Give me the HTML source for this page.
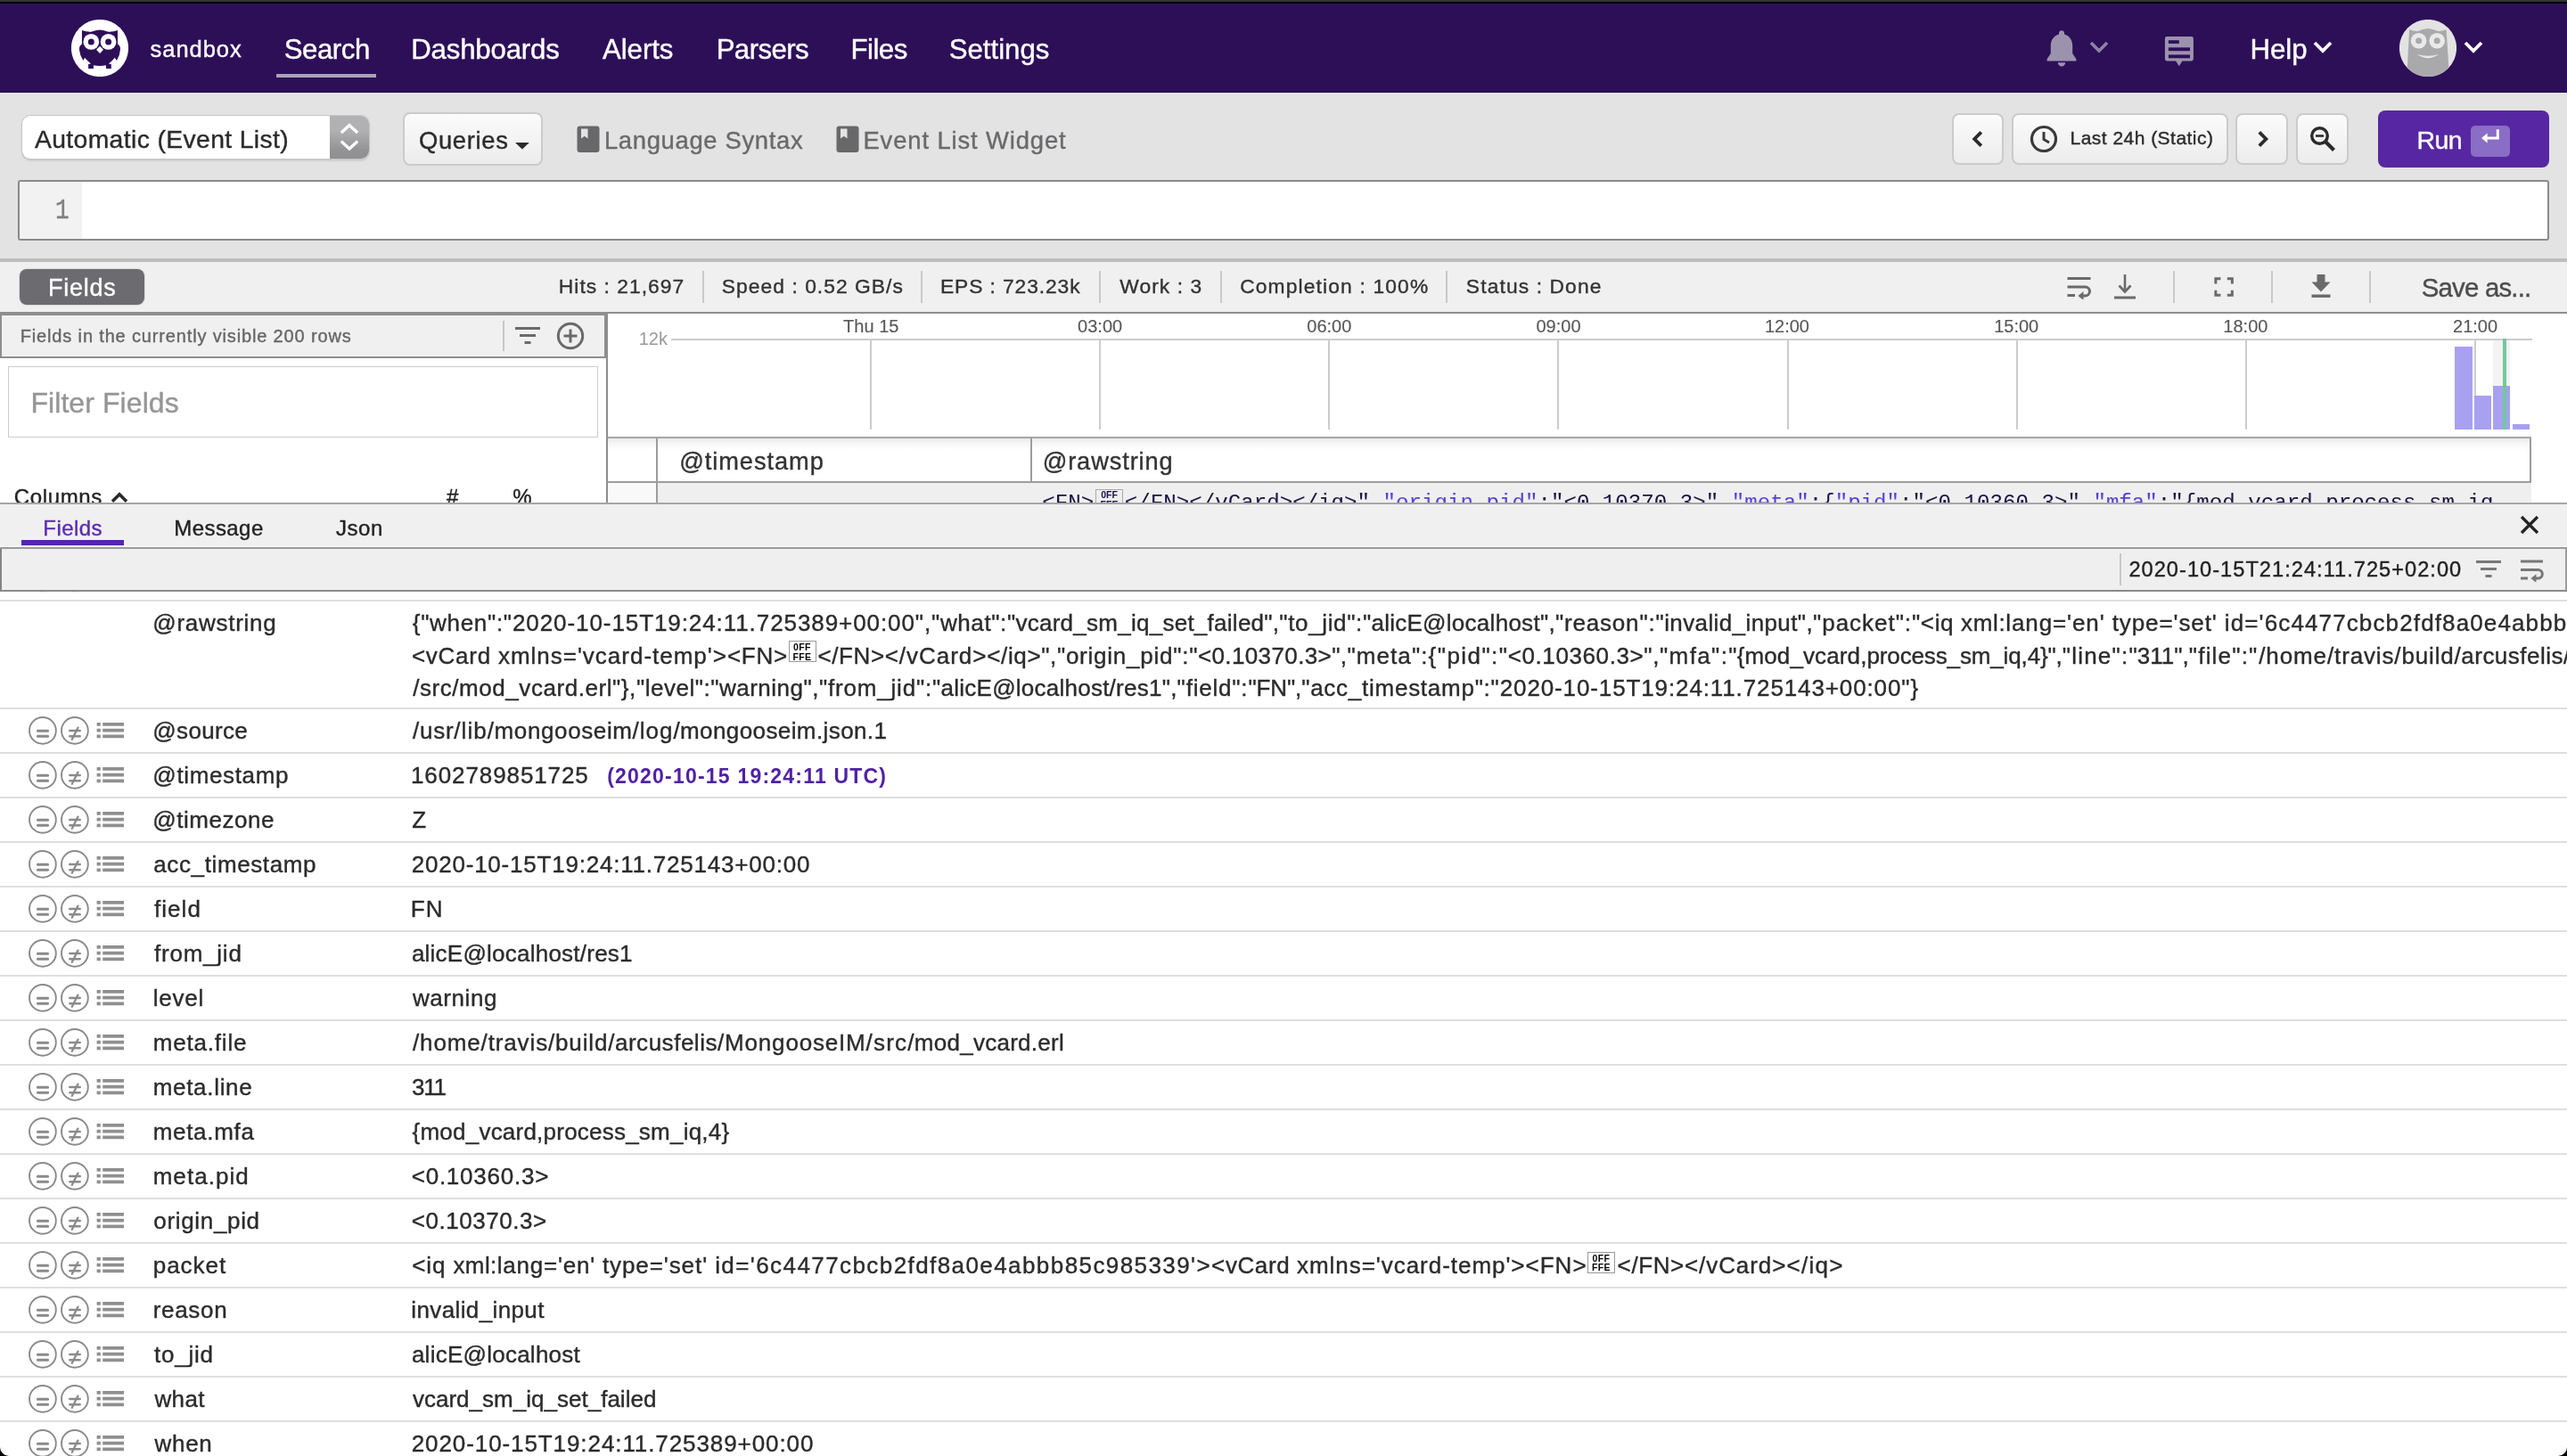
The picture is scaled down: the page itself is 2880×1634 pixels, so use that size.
<!DOCTYPE html>
<html><head><meta charset="utf-8"><title>sandbox - Search</title><style>
html,body{margin:0;padding:0;}
body{width:2880px;height:1634px;overflow:hidden;position:relative;background:#fff;font-family:"Liberation Sans",sans-serif;}
#root{position:absolute;left:0;top:0;width:2880px;height:1634px;overflow:hidden;will-change:transform;}
.b{position:absolute;display:block;}
.t{position:absolute;white-space:pre;-webkit-text-stroke:0.38px currentColor;}
.hv{-webkit-text-stroke:0.4px currentColor;}
.ns{-webkit-text-stroke:0 transparent;}
.lt{-webkit-text-stroke:0.15px currentColor;}
.mono{font-family:"Liberation Mono",monospace;}
.g2{display:inline-block;width:31.6px;margin:0 1.55px;height:24px;border:1px solid #aaa;box-sizing:border-box;vertical-align:1px;font-size:10.5px;line-height:10.5px;letter-spacing:0;font-family:"Liberation Sans",sans-serif;font-weight:700;text-align:center;}
.g{display:inline-block;width:31px;height:24px;border:1px solid #9a9a9a;box-sizing:border-box;vertical-align:-2px;font-size:10.5px;line-height:10.5px;letter-spacing:0.4px;font-weight:700;text-align:center;padding-top:1px;overflow:hidden;}
</style></head>
<body>
<div id="root">
<div class="b" style="left:0px;top:0px;width:2880px;height:2px;background:#343434;"></div>
<div class="b" style="left:0px;top:2px;width:2880px;height:2px;background:#000;"></div>
<div class="b" style="left:0px;top:4px;width:2880px;height:100px;background:#2d0f58;"></div>
<div class="b" style="left:0px;top:103px;width:2880px;height:1px;background:#220a48;"></div>
<svg class="b" style="left:80px;top:22px;" width="64" height="64" viewBox="0 0 64 64">
<circle cx="32" cy="32" r="32.100" fill="#fff"/>
<path d="M11.900 11.900 Q17 13.900 22.300 13.700 Q27 12 31.900 11.600 Q37 12 41.500 13.700 Q47 13.900 52 11.900 L52 27.500 Q55.600 29.500 54.900 34 Q54.500 40.500 50.900 46 L48.800 42.800 Q46 46.500 41.900 49.400 L44.800 50 L44.800 54.900 L39 54.900 L39 51.200 Q32 52.600 24.900 51.200 L24.900 54.900 L19.100 54.900 L19.100 50 L22 49.400 Q18 46.500 15.100 42.800 L13.400 46 Q9.600 40.500 9 34 Q8.400 29.500 11.900 27.500 Z" fill="#2d0f58"/>
<circle cx="22.300" cy="24.900" r="8.900" fill="#fff"/><circle cx="41.600" cy="24.900" r="8.900" fill="#fff"/>
<circle cx="22.300" cy="24.900" r="3.500" fill="#2d0f58"/><circle cx="41.600" cy="24.900" r="3.500" fill="#2d0f58"/>
<path d="M32 29.800 L36 33.800 L32.100 37.900 L28.100 33.800 Z" fill="#fff"/>
</svg>
<div class="t hv" style="left:168.59px;top:39.00px;font-size:25.5px;line-height:33px;color:#fff;letter-spacing:0.962px;">sandbox</div>
<div class="t hv" style="left:318.68px;top:35.00px;font-size:31.2px;line-height:41px;color:#fff;letter-spacing:-0.443px;">Search</div>
<div class="t hv" style="left:461.24px;top:35.00px;font-size:31.2px;line-height:41px;color:#fff;letter-spacing:-0.172px;">Dashboards</div>
<div class="t hv" style="left:676.04px;top:35.00px;font-size:31.2px;line-height:41px;color:#fff;letter-spacing:-0.073px;">Alerts</div>
<div class="t hv" style="left:803.64px;top:35.00px;font-size:31.2px;line-height:41px;color:#fff;letter-spacing:-0.568px;">Parsers</div>
<div class="t hv" style="left:954.44px;top:35.00px;font-size:31.2px;line-height:41px;color:#fff;letter-spacing:-0.497px;">Files</div>
<div class="t hv" style="left:1064.68px;top:35.00px;font-size:31.2px;line-height:41px;color:#fff;">Settings</div>
<div class="b" style="left:310px;top:83px;width:112px;height:4px;background:#a7a4b6;"></div>
<svg class="b" style="left:2294px;top:32px;" width="38" height="44" viewBox="0 0 38 44">
<path d="M19 2.2 a3 3 0 0 1 3 3 v1.2 c6 1.6 9.200 6.600 9.200 13 v8.600 l4.200 6.200 v2.200 h-32.800 v-2.200 l4.200-6.200 v-8.600 c0-6.400 3.200-11.400 9.200-13 v-1.200 a3 3 0 0 1 3-3z" fill="#9b93ad"/>
<path d="M14.800 38.200 h8.400 a4.200 4.200 0 0 1 -8.400 0z" fill="#9b93ad"/></svg>
<svg class="b" style="left:2343px;top:45px;" width="24" height="16" viewBox="0 0 24 16"><path d="M3 3 L12 12 L21 3" stroke="#8d84a3" stroke-width="3.6" fill="none"/></svg>
<svg class="b" style="left:2428px;top:40px;" width="34" height="36" viewBox="0 0 34 36">
<path d="M3.200 1 h27.400 a2.300 2.300 0 0 1 2.300 2.300 v22.800 a2.300 2.300 0 0 1 -2.300 2.300 h-10.200 l-3.600 5.800 l-3.600-5.800 h-10 a2.300 2.300 0 0 1 -2.300-2.300 v-22.800 a2.300 2.300 0 0 1 2.300-2.300z" fill="#9b93ad"/>
<rect x="4.900" y="5.200" width="11.900" height="3.700" fill="#2d0f58"/>
<rect x="4.900" y="13.300" width="24.100" height="3.900" fill="#2d0f58"/>
<rect x="4.900" y="21.400" width="24.100" height="3.900" fill="#2d0f58"/></svg>
<div class="t hv" style="left:2524.44px;top:35.00px;font-size:31.2px;line-height:41px;color:#fff;letter-spacing:-0.033px;">Help</div>
<svg class="b" style="left:2594px;top:45px;" width="24" height="16" viewBox="0 0 24 16"><path d="M3 3 L12 12 L21 3" stroke="#fff" stroke-width="3.800" fill="none"/></svg>
<svg class="b" style="left:2692px;top:22px;" width="64" height="64" viewBox="0 0 64 64">
<defs><clipPath id="av"><circle cx="32" cy="32" r="32.100"/></clipPath></defs>
<circle cx="32" cy="32" r="32.100" fill="#e3e3e3"/>
<g clip-path="url(#av)">
<path d="M11.100 11.300 Q16 13.200 20.600 13 Q26 10.500 31.800 9.900 Q38 10.500 43.200 13 Q48 13.200 52.600 11.300 L55.200 50.600 L56 66 L8 66 L9 50.600 Z" fill="#a9a9ab"/>
<circle cx="21.600" cy="23.800" r="8.800" fill="#e9e9e9"/><circle cx="42.200" cy="23.800" r="8.800" fill="#e9e9e9"/>
<circle cx="21.600" cy="23.800" r="3.500" fill="#a9a9ab"/><circle cx="42.200" cy="23.800" r="3.500" fill="#a9a9ab"/>
<path d="M19.700 39 Q32 42.600 44.200 39 Q32 47.300 19.700 39Z" fill="#e9e9e9"/>
</g></svg>
<svg class="b" style="left:2763px;top:45px;" width="24" height="16" viewBox="0 0 24 16"><path d="M3 3 L12 12 L21 3" stroke="#fff" stroke-width="3.800" fill="none"/></svg>
<div class="b" style="left:0px;top:104px;width:2880px;height:186px;background:#e3e3e3;"></div>
<div class="b" style="left:25px;top:130px;width:389px;height:48px;background:#fff;border-radius:9px;box-shadow:0 0 0 1px #c6c6c6,0 2px 3px rgba(0,0,0,.16);overflow:hidden;"><div class="b" style="left:345px;top:0;width:44px;height:48px;background:linear-gradient(#b2b2b4 0,#b0b0b2 35%,#939395 80%,#909092 100%);"></div><svg class="b" style="left:345px;top:-1px" width="44" height="49" viewBox="0 0 44 49"><path d="M12.800 20 L22 11.600 L31.200 20 M12.800 29.600 L22 38 L31.200 29.600" stroke="#fff" stroke-width="3.400" fill="none"/></svg></div>
<div class="t " style="left:38.94px;top:138.00px;font-size:28.3px;line-height:37px;color:#2b2b2b;letter-spacing:0.381px;">Automatic (Event List)</div>
<div class="b" style="left:452px;top:126px;width:157px;height:60px;border:2px solid #cbcbcb;border-radius:8px;background:linear-gradient(#fbfbfb,#ececec);box-sizing:border-box;"></div>
<div class="t " style="left:469.90px;top:140.00px;font-size:27.4px;line-height:36px;color:#2b2b2b;letter-spacing:0.691px;">Queries</div>
<svg class="b" style="left:578px;top:159.5px;" width="16" height="8" viewBox="0 0 16 8"><path d="M0 0 L15.800 0 L7.900 7.500Z" fill="#2b2b2b"/></svg>
<svg class="b" style="left:647px;top:141px;" width="26" height="31" viewBox="0 0 26 31"><path d="M3.500 0.500 h19 a3 3 0 0 1 3 3 v23.500 a3 3 0 0 1 -3 3 h-19 a3 3 0 0 1 -3-3 v-23.500 a3 3 0 0 1 3-3z" fill="#68686b"/><path d="M5 3.500 h7.500 v11 l-3.750-2.800 l-3.750 2.800z" fill="#e3e3e3"/></svg>
<div class="t " style="left:677.95px;top:140.00px;font-size:27.4px;line-height:36px;color:#6a6a6d;letter-spacing:0.675px;">Language Syntax</div>
<svg class="b" style="left:938px;top:141px;" width="26" height="31" viewBox="0 0 26 31"><path d="M3.500 0.500 h19 a3 3 0 0 1 3 3 v23.500 a3 3 0 0 1 -3 3 h-19 a3 3 0 0 1 -3-3 v-23.500 a3 3 0 0 1 3-3z" fill="#68686b"/><path d="M5 3.500 h7.500 v11 l-3.750-2.800 l-3.750 2.800z" fill="#e3e3e3"/></svg>
<div class="t " style="left:968.45px;top:140.00px;font-size:27.4px;line-height:36px;color:#6a6a6d;letter-spacing:0.884px;">Event List Widget</div>
<div class="b" style="left:2189.6px;top:126.5px;width:58.80000000000018px;height:58.80000000000001px;border:2px solid #cbcbcb;border-radius:8px;background:linear-gradient(#fbfbfb,#ececec);box-sizing:border-box;"></div>
<svg class="b" style="left:2208px;top:145.2px;" width="22" height="22" viewBox="0 0 22 22"><path d="M14.800 3.400 L7.200 11 L14.800 18.600" stroke="#2b2b2b" stroke-width="3.800" fill="none"/></svg>
<div class="b" style="left:2257px;top:126.5px;width:242.5999999999999px;height:58.80000000000001px;border:2px solid #cbcbcb;border-radius:8px;background:linear-gradient(#fbfbfb,#ececec);box-sizing:border-box;"></div>
<svg class="b" style="left:2277px;top:140px;" width="32" height="32" viewBox="0 0 32 32"><circle cx="16" cy="16" r="13.500" stroke="#3a3a3a" stroke-width="3.200" fill="none"/><path d="M16 8 V16.500 L22 20" stroke="#3a3a3a" stroke-width="3" fill="none"/></svg>
<div class="t " style="left:2322.58px;top:141.00px;font-size:21px;line-height:27px;color:#2b2b2b;letter-spacing:0.464px;">Last 24h (Static)</div>
<div class="b" style="left:2508.3px;top:126.5px;width:58.899999999999636px;height:58.80000000000001px;border:2px solid #cbcbcb;border-radius:8px;background:linear-gradient(#fbfbfb,#ececec);box-sizing:border-box;"></div>
<svg class="b" style="left:2527px;top:145.2px;" width="22" height="22" viewBox="0 0 22 22"><path d="M7.800 3.400 L15.400 11 L7.800 18.600" stroke="#2b2b2b" stroke-width="3.800" fill="none"/></svg>
<div class="b" style="left:2576.2px;top:126.5px;width:58.80000000000018px;height:58.80000000000001px;border:2px solid #cbcbcb;border-radius:8px;background:linear-gradient(#fbfbfb,#ececec);box-sizing:border-box;"></div>
<svg class="b" style="left:2591px;top:140.8px;" width="30" height="30" viewBox="0 0 30 30"><circle cx="11.500" cy="11.500" r="8.800" stroke="#2b2b2b" stroke-width="3.400" fill="none"/><path d="M18 18 L27.500 27.500" stroke="#2b2b2b" stroke-width="4.200"/><path d="M7 11.500 H16" stroke="#2b2b2b" stroke-width="2.600"/></svg>
<div class="b" style="left:2668px;top:124px;width:192px;height:64px;background:#5727a3;border-radius:8px;"></div>
<div class="t hv" style="left:2711.46px;top:139.00px;font-size:28.5px;line-height:37px;color:#fff;letter-spacing:-0.597px;">Run</div>
<div class="b" style="left:2772px;top:141px;width:44px;height:35px;background:#8a6dc4;border-radius:5px;"></div>
<svg class="b" style="left:2783px;top:144px;" width="24" height="18" viewBox="0 0 24 18"><path d="M19.300 1.200 V11.100 H5" stroke="#fff" stroke-width="3" fill="none"/><path d="M1 11.100 L7.600 5.600 V16.600Z" fill="#fff"/></svg>
<div class="b" style="left:20px;top:202px;width:2840px;height:68px;background:#fff;border:2px solid #8a8a8c;border-radius:3px;box-sizing:border-box;overflow:hidden;"><div class="b" style="left:0;top:0;width:70px;height:70px;background:#f2f2f2"></div></div>
<div class="t " style="left:62.40px;top:217.00px;font-size:30.5px;line-height:40px;color:#808080;font-family:'Liberation Mono', monospace;transform:scaleX(0.86);transform-origin:0 0;">1</div>
<div class="b" style="left:0px;top:290px;width:2880px;height:4px;background:#bdbdbd;"></div>
<div class="b" style="left:0px;top:294px;width:2880px;height:56px;background:#f0f0f0;"></div>
<div class="b" style="left:22px;top:302px;width:140px;height:40px;background:#6c6c70;border-radius:8px;box-shadow:0 0 0 1px #dcdcdc;"></div>
<div class="t hv" style="left:53.99px;top:306.00px;font-size:27px;line-height:35px;color:#fff;letter-spacing:0.754px;">Fields</div>
<div class="t " style="left:626.83px;top:306.00px;font-size:22.8px;line-height:30px;color:#333;letter-spacing:1.026px;">Hits : 21,697</div>
<div class="t " style="left:809.86px;top:306.00px;font-size:22.8px;line-height:30px;color:#333;letter-spacing:1.046px;">Speed : 0.52 GB/s</div>
<div class="t " style="left:1055.03px;top:306.00px;font-size:22.8px;line-height:30px;color:#333;letter-spacing:0.898px;">EPS : 723.23k</div>
<div class="t " style="left:1256.30px;top:306.00px;font-size:22.8px;line-height:30px;color:#333;letter-spacing:1.048px;">Work : 3</div>
<div class="t " style="left:1391.14px;top:306.00px;font-size:22.8px;line-height:30px;color:#333;letter-spacing:1.152px;">Completion : 100%</div>
<div class="t " style="left:1644.86px;top:306.00px;font-size:22.8px;line-height:30px;color:#333;letter-spacing:1.117px;">Status : Done</div>
<div class="b" style="left:788px;top:304px;width:2px;height:36px;background:#c9c9c9;"></div>
<div class="b" style="left:1033px;top:304px;width:2px;height:36px;background:#c9c9c9;"></div>
<div class="b" style="left:1233px;top:304px;width:2px;height:36px;background:#c9c9c9;"></div>
<div class="b" style="left:1369px;top:304px;width:2px;height:36px;background:#c9c9c9;"></div>
<div class="b" style="left:1622px;top:304px;width:2px;height:36px;background:#c9c9c9;"></div>
<div class="b" style="left:2438px;top:304px;width:2px;height:36px;background:#c9c9c9;"></div>
<div class="b" style="left:2548px;top:304px;width:2px;height:36px;background:#c9c9c9;"></div>
<div class="b" style="left:2658px;top:304px;width:2px;height:36px;background:#c9c9c9;"></div>
<svg class="b" style="left:2318px;top:309px;" width="30" height="27" viewBox="0 0 30 27"><path d="M1.500 3.500 H27.500" stroke="#6a6a6a" stroke-width="3"/><path d="M1.500 13 H21.500 a5 5 0 0 1 0 10 H17" stroke="#6a6a6a" stroke-width="3" fill="none"/><path d="M19.500 18 L13.500 23 L19.500 28Z" fill="#6a6a6a"/><path d="M1.500 22.500 H10" stroke="#6a6a6a" stroke-width="3"/></svg>
<svg class="b" style="left:2370px;top:307px;" width="28" height="30" viewBox="0 0 28 30"><path d="M14 1 V20" stroke="#6a6a6a" stroke-width="2.600"/><path d="M7.500 13.500 L14 20.500 L20.500 13.500" stroke="#6a6a6a" stroke-width="2.600" fill="none"/><path d="M2 27 H26" stroke="#6a6a6a" stroke-width="3"/></svg>
<svg class="b" style="left:2483.5px;top:310.7px;" width="22.2" height="22.2" viewBox="0 0 24 24"><path d="M2 8 V2 H8 M16 2 H22 V8 M22 16 V22 H16 M8 22 H2 V16" stroke="#6a6a6a" stroke-width="3.200" fill="none"/></svg>
<svg class="b" style="left:2592px;top:307px;" width="24" height="28" viewBox="0 0 24 28"><path d="M7.500 1 H16.500 V9.500 H22.500 L12 20.500 L1.500 9.500 H7.500Z" fill="#6a6a6a"/><rect x="1.500" y="23.500" width="21" height="3.400" fill="#6a6a6a"/></svg>
<div class="t " style="left:2716.76px;top:304.00px;font-size:29.4px;line-height:38px;color:#4d4d4d;letter-spacing:-0.802px;">Save as...</div>
<div class="b" style="left:0px;top:350px;width:2880px;height:2px;background:#8e8e90;"></div>
<div class="b" style="left:0px;top:352px;width:682px;height:213px;background:#fff;"></div>
<div class="b" style="left:0px;top:352px;width:679px;height:48px;background:#f0f0f0;"></div>
<div class="b" style="left:0px;top:352px;width:682px;height:2px;background:#8e8e90;"></div>
<div class="b" style="left:0px;top:400px;width:682px;height:2px;background:#8e8e90;"></div>
<div class="b" style="left:0px;top:352px;width:2px;height:50px;background:#8e8e90;"></div>
<div class="b" style="left:678px;top:352px;width:4px;height:50px;background:#8e8e90;"></div>
<div class="b" style="left:680px;top:402px;width:2px;height:163px;background:#8e8e90;"></div>
<div class="t " style="left:22.76px;top:364.00px;font-size:20px;line-height:26px;color:#666;letter-spacing:0.847px;">Fields in the currently visible 200 rows</div>
<div class="b" style="left:564px;top:360px;width:2px;height:34px;background:#c6c6c6;"></div>
<svg class="b" style="left:577px;top:366px;" width="30" height="21" viewBox="0 0 30 21"><path d="M1 2.500 H29 M6 10.500 H24 M11.500 18.500 H18.500" stroke="#6a6a6a" stroke-width="3"/></svg>
<svg class="b" style="left:624px;top:361px;" width="32" height="32" viewBox="0 0 32 32"><circle cx="16" cy="16" r="13.700" stroke="#6a6a6a" stroke-width="3" fill="none"/><path d="M16 8.500 V23.500 M8.500 16 H23.500" stroke="#6a6a6a" stroke-width="3"/></svg>
<div class="b" style="left:9px;top:411px;width:662px;height:80px;border:1px solid #cdcdcd;box-sizing:border-box;"></div>
<div class="t " style="left:34.38px;top:431.00px;font-size:32px;line-height:42px;color:#969698;letter-spacing:0.085px;">Filter Fields</div>
<div class="t " style="left:15.78px;top:542.00px;font-size:24px;line-height:31px;color:#222;letter-spacing:0.631px;">Columns</div>
<svg class="b" style="left:122.5px;top:550px;" width="22" height="16" viewBox="0 0 22 16"><path d="M3 12.800 L11 4.800 L19 12.800" stroke="#2a2a2a" stroke-width="3.600" fill="none"/></svg>
<div class="t " style="left:500.89px;top:542.00px;font-size:24px;line-height:31px;color:#222;letter-spacing:1.475px;">#</div>
<div class="t " style="left:575.14px;top:542.00px;font-size:24px;line-height:31px;color:#222;letter-spacing:0.371px;">%</div>
<div class="b" style="left:682px;top:352px;width:2198px;height:139px;background:#fff;"></div>
<div class="t ns" style="left:716.68px;top:367.00px;font-size:20px;line-height:26px;color:#999;letter-spacing:0.024px;">12k</div>
<div class="b" style="left:753px;top:380px;width:2088px;height:2px;background:#cccccc;"></div>
<div class="b" style="left:976px;top:382px;width:2px;height:100px;background:#cccccc;"></div>
<div class="t lt" style="left:946.12px;top:353.00px;font-size:20px;line-height:26px;color:#585858;">Thu 15</div>
<div class="b" style="left:1233px;top:382px;width:2px;height:100px;background:#cccccc;"></div>
<div class="t lt" style="left:1209.09px;top:353.00px;font-size:20px;line-height:26px;color:#585858;">03:00</div>
<div class="b" style="left:1490px;top:382px;width:2px;height:100px;background:#cccccc;"></div>
<div class="t lt" style="left:1466.29px;top:353.00px;font-size:20px;line-height:26px;color:#585858;">06:00</div>
<div class="b" style="left:1747px;top:382px;width:2px;height:100px;background:#cccccc;"></div>
<div class="t lt" style="left:1723.49px;top:353.00px;font-size:20px;line-height:26px;color:#585858;">09:00</div>
<div class="b" style="left:2005px;top:382px;width:2px;height:100px;background:#cccccc;"></div>
<div class="t lt" style="left:1979.95px;top:353.00px;font-size:20px;line-height:26px;color:#585858;">12:00</div>
<div class="b" style="left:2262px;top:382px;width:2px;height:100px;background:#cccccc;"></div>
<div class="t lt" style="left:2237.15px;top:353.00px;font-size:20px;line-height:26px;color:#585858;">15:00</div>
<div class="b" style="left:2519px;top:382px;width:2px;height:100px;background:#cccccc;"></div>
<div class="t lt" style="left:2494.35px;top:353.00px;font-size:20px;line-height:26px;color:#585858;">18:00</div>
<div class="b" style="left:2776px;top:382px;width:2px;height:100px;background:#cccccc;"></div>
<div class="t lt" style="left:2752.07px;top:353.00px;font-size:20px;line-height:26px;color:#585858;">21:00</div>
<div class="b" style="left:2797px;top:382px;width:19px;height:51px;background:#f3f3f3;"></div>
<div class="b" style="left:2754px;top:389px;width:20px;height:93px;background:#a8a0f1;"></div>
<div class="b" style="left:2776px;top:444px;width:19px;height:38px;background:#a8a0f1;"></div>
<div class="b" style="left:2797px;top:433px;width:19px;height:49px;background:#a8a0f1;"></div>
<div class="b" style="left:2819px;top:476px;width:19px;height:6px;background:#a8a0f1;"></div>
<div class="b" style="left:2808px;top:380px;width:4px;height:102px;background:#72c79c;"></div>
<div class="b" style="left:682px;top:490px;width:2158px;height:2px;background:#a6a6a6;"></div>
<div class="b" style="left:682px;top:492px;width:2157px;height:48px;background:#fff;background:linear-gradient(#e9e9e9 0,#f7f7f7 6px,#fff 13px);"></div>
<div class="b" style="left:736px;top:492px;width:2px;height:73px;background:#9c9c9c;"></div>
<div class="b" style="left:1156px;top:492px;width:2px;height:48px;background:#9c9c9c;"></div>
<div class="b" style="left:2838px;top:492px;width:2px;height:48px;background:#9c9c9c;"></div>
<div class="b" style="left:682px;top:540px;width:2158px;height:2px;background:#9e9e9e;"></div>
<div class="t " style="left:762.16px;top:500.00px;font-size:27.2px;line-height:35px;color:#333;letter-spacing:0.957px;">@timestamp</div>
<div class="t " style="left:1169.66px;top:500.00px;font-size:27.2px;line-height:35px;color:#333;letter-spacing:0.904px;">@rawstring</div>
<div class="b" style="left:738px;top:542px;width:2102px;height:23px;background:#efefef;"></div>
<div class="b" style="left:682px;top:542px;width:54px;height:23px;background:#f9f9f9;"></div>
<div class="b" style="left:1160px;top:542px;width:1680px;height:23px;overflow:hidden;"><div class="t mono ns" style="left:9.2px;top:7.3px;font-size:24.15px;line-height:30px;color:#1c0f45;">&lt;FN&gt;<span class="g2">0FF<br>FFE</span>&lt;/FN&gt;&lt;/vCard&gt;&lt;/iq&gt;&quot;,<span style="color:#5a3fd6">&quot;origin_pid&quot;</span>:&quot;&lt;0.10370.3&gt;&quot;,<span style="color:#5a3fd6">&quot;meta&quot;</span>:{<span style="color:#5a3fd6">&quot;pid&quot;</span>:&quot;&lt;0.10360.3&gt;&quot;,<span style="color:#5a3fd6">&quot;mfa&quot;</span>:&quot;{mod_vcard,process_sm_iq,</div></div>
<div class="b" style="left:0px;top:564px;width:2880px;height:2px;background:#a6a6a6;"></div>
<div class="b" style="left:0px;top:566px;width:2880px;height:47px;background:#f0f0f0;"></div>
<div class="t " style="left:48.33px;top:577.00px;font-size:24px;line-height:31px;color:#5a2bb0;letter-spacing:0.443px;">Fields</div>
<div class="b" style="left:24px;top:606px;width:115px;height:6px;background:#5624b0;"></div>
<div class="t " style="left:195.23px;top:577.00px;font-size:24px;line-height:31px;color:#222;letter-spacing:0.442px;">Message</div>
<div class="t " style="left:376.93px;top:577.00px;font-size:24px;line-height:31px;color:#222;letter-spacing:0.546px;">Json</div>
<svg class="b" style="left:2826px;top:577px;" width="24" height="24" viewBox="0 0 24 24"><path d="M3 3 L21 21 M21 3 L3 21" stroke="#222" stroke-width="3.200"/></svg>
<div class="b" style="left:0px;top:613.7px;width:2880px;height:2.2999999999999545px;background:#9a9a9a;"></div>
<div class="b" style="left:0px;top:616px;width:2880px;height:46px;background:#efefef;"></div>
<div class="b" style="left:0px;top:616px;width:2px;height:48px;background:#858585;"></div>
<div class="b" style="left:2878px;top:616px;width:2px;height:48px;background:#9c9c9c;"></div>
<div class="b" style="left:0px;top:662px;width:2880px;height:2px;background:#8a8a8a;"></div>
<div class="b" style="left:2378px;top:621px;width:2px;height:36px;background:#c8c8c8;"></div>
<div class="t " style="left:2388.41px;top:624.00px;font-size:23.6px;line-height:31px;color:#222;letter-spacing:1.032px;">2020-10-15T21:24:11.725+02:00</div>
<svg class="b" style="left:2777px;top:628px;" width="30" height="21" viewBox="0 0 30 21"><path d="M1 2.500 H29 M6 10.500 H24 M11.500 18.500 H18.500" stroke="#777" stroke-width="3"/></svg>
<svg class="b" style="left:2827px;top:627px;" width="28" height="26" viewBox="0 0 28 26"><path d="M1 3 H26" stroke="#777" stroke-width="3"/><path d="M1 12.500 H20.500 a4.800 4.800 0 0 1 0 9.600 H16.500" stroke="#777" stroke-width="3" fill="none"/><path d="M18.500 17.300 L12.500 22.100 L18.500 27Z" fill="#777"/><path d="M1 22 H9" stroke="#777" stroke-width="3"/></svg>
<div class="b" style="left:0px;top:664px;width:2880px;height:970px;background:#fff;"></div>
<div class="b" style="left:0px;top:673px;width:2880px;height:2px;background:#dfdfdf;"></div>
<svg class="b" style="left:32px;top:656px;clip-path:inset(8px 0 0 0);" width="70" height="10" viewBox="0 0 70 10"><circle cx="15.800" cy="-7.500" r="15" stroke="#999" stroke-width="1.600" fill="none"/><circle cx="51.800" cy="-7.500" r="15" stroke="#999" stroke-width="1.600" fill="none"/></svg>
<div class="t " style="left:171.36px;top:682.00px;font-size:26px;line-height:34px;color:#2b2b2b;letter-spacing:0.717px;">@rawstring</div>
<div class="t" style="left:462.77px;top:682.00px;font-size:26px;line-height:34px;color:#2b2b2b;letter-spacing:0.688px;">{"when":</div>
<div class="t" style="left:564.80px;top:682.00px;font-size:26px;line-height:34px;color:#2b2b2b;letter-spacing:0.921px;">"2020-10-15T19:24:11.725389+00:00",</div>
<div class="t" style="left:1045.10px;top:682.00px;font-size:26px;line-height:34px;color:#2b2b2b;letter-spacing:0.600px;">"what":</div>
<div class="t" style="left:1129.90px;top:682.00px;font-size:26px;line-height:34px;color:#2b2b2b;letter-spacing:0.263px;">"vcard_sm_iq_set_failed",</div>
<div class="t" style="left:1435.30px;top:682.00px;font-size:26px;line-height:34px;color:#2b2b2b;letter-spacing:0.640px;">"to_jid":</div>
<div class="t" style="left:1528.90px;top:682.00px;font-size:26px;line-height:34px;color:#2b2b2b;letter-spacing:0.275px;">"alicE@localhost",</div>
<div class="t" style="left:1744.90px;top:682.00px;font-size:26px;line-height:34px;color:#2b2b2b;letter-spacing:0.824px;">"reason":</div>
<div class="t" style="left:1857.50px;top:682.00px;font-size:26px;line-height:34px;color:#2b2b2b;letter-spacing:0.398px;">"invalid_input",</div>
<div class="t" style="left:2034.10px;top:682.00px;font-size:26px;line-height:34px;color:#2b2b2b;letter-spacing:0.957px;">"packet":</div>
<div class="t" style="left:2145.00px;top:682.00px;font-size:26px;line-height:34px;color:#2b2b2b;letter-spacing:0.636px;">"&lt;iq xml:</div>
<div class="t" style="left:2250.25px;top:682.00px;font-size:26px;line-height:34px;color:#2b2b2b;letter-spacing:0.905px;">lang='en' </div>
<div class="t" style="left:2369.71px;top:682.00px;font-size:26px;line-height:34px;color:#2b2b2b;letter-spacing:0.899px;">type='set' </div>
<div class="t" style="left:2495.76px;top:682.00px;font-size:26px;line-height:34px;color:#2b2b2b;letter-spacing:1.131px;">id='6c4477cbcb2fdf8a0e4abbb85c985339'&gt;</div>
<div class="t" style="left:461.92px;top:719.00px;font-size:26px;line-height:34px;color:#2b2b2b;letter-spacing:0.747px;">&lt;vCard </div>
<div class="t" style="left:558.91px;top:719.00px;font-size:26px;line-height:34px;color:#2b2b2b;letter-spacing:0.988px;">xmlns='vcard-temp'&gt;</div>
<div class="t" style="left:815.92px;top:719.00px;font-size:26px;line-height:34px;color:#2b2b2b;letter-spacing:0.709px;">&lt;FN&gt;</div>
<div class="b g" style="left:884.5px;top:719.4px;">0FF<br>FFE</div>
<div class="t" style="left:917.42px;top:719.00px;font-size:26px;line-height:34px;color:#2b2b2b;letter-spacing:0.610px;">&lt;/FN&gt;</div>
<div class="t" style="left:992.72px;top:719.00px;font-size:26px;line-height:34px;color:#2b2b2b;letter-spacing:0.957px;">&lt;/vCard&gt;</div>
<div class="t" style="left:1107.32px;top:719.00px;font-size:26px;line-height:34px;color:#2b2b2b;letter-spacing:0.614px;">&lt;/iq&gt;",</div>
<div class="t" style="left:1185.90px;top:719.00px;font-size:26px;line-height:34px;color:#2b2b2b;letter-spacing:0.767px;">"origin_pid":</div>
<div class="t" style="left:1334.30px;top:719.00px;font-size:26px;line-height:34px;color:#2b2b2b;letter-spacing:0.384px;">"&lt;0.10370.3&gt;",</div>
<div class="t" style="left:1511.40px;top:719.00px;font-size:26px;line-height:34px;color:#2b2b2b;letter-spacing:1.098px;">"meta":</div>
<div class="t" style="left:1602.57px;top:719.00px;font-size:26px;line-height:34px;color:#2b2b2b;letter-spacing:1.452px;">{"pid":</div>
<div class="t" style="left:1681.80px;top:719.00px;font-size:26px;line-height:34px;color:#2b2b2b;letter-spacing:0.606px;">"&lt;0.10360.3&gt;",</div>
<div class="t" style="left:1862.00px;top:719.00px;font-size:26px;line-height:34px;color:#2b2b2b;letter-spacing:1.379px;">"mfa":</div>
<div class="t" style="left:1939.30px;top:719.00px;font-size:26px;line-height:34px;color:#2b2b2b;letter-spacing:0.123px;">"{mod_vcard,</div>
<div class="t" style="left:2094.52px;top:719.00px;font-size:26px;line-height:34px;color:#2b2b2b;letter-spacing:-0.139px;">process_sm_iq,4}",</div>
<div class="t" style="left:2313.70px;top:719.00px;font-size:26px;line-height:34px;color:#2b2b2b;letter-spacing:1.235px;">"line":</div>
<div class="t" style="left:2388.50px;top:719.00px;font-size:26px;line-height:34px;color:#2b2b2b;letter-spacing:0.028px;">"311",</div>
<div class="t" style="left:2455.80px;top:719.00px;font-size:26px;line-height:34px;color:#2b2b2b;letter-spacing:1.197px;">"file":</div>
<div class="t" style="left:2523.10px;top:719.00px;font-size:26px;line-height:34px;color:#2b2b2b;letter-spacing:1.875px;">"</div>
<div class="t" style="left:2534.20px;top:719.00px;font-size:26px;line-height:34px;color:#2b2b2b;letter-spacing:0.908px;">/home</div>
<div class="t" style="left:2611.00px;top:719.00px;font-size:26px;line-height:34px;color:#2b2b2b;letter-spacing:0.851px;">/travis</div>
<div class="t" style="left:2686.30px;top:719.00px;font-size:26px;line-height:34px;color:#2b2b2b;letter-spacing:0.857px;">/build</div>
<div class="t" style="left:2753.60px;top:719.00px;font-size:26px;line-height:34px;color:#2b2b2b;letter-spacing:0.480px;">/arcusfelis/MongooseIM</div>
<div class="t" style="left:463.20px;top:755.00px;font-size:26px;line-height:34px;color:#2b2b2b;letter-spacing:0.558px;">/src/mod_vcard.erl"},</div>
<div class="t" style="left:713.90px;top:755.00px;font-size:26px;line-height:34px;color:#2b2b2b;letter-spacing:0.518px;">"level":</div>
<div class="t" style="left:797.20px;top:755.00px;font-size:26px;line-height:34px;color:#2b2b2b;letter-spacing:0.497px;">"warning",</div>
<div class="t" style="left:918.90px;top:755.00px;font-size:26px;line-height:34px;color:#2b2b2b;letter-spacing:0.822px;">"from_jid":</div>
<div class="t" style="left:1046.10px;top:755.00px;font-size:26px;line-height:34px;color:#2b2b2b;letter-spacing:0.246px;">"alicE@localhost/res1",</div>
<div class="t" style="left:1320.60px;top:755.00px;font-size:26px;line-height:34px;color:#2b2b2b;letter-spacing:0.803px;">"field":</div>
<div class="t" style="left:1400.40px;top:755.00px;font-size:26px;line-height:34px;color:#2b2b2b;letter-spacing:-0.108px;">"FN",</div>
<div class="t" style="left:1460.20px;top:755.00px;font-size:26px;line-height:34px;color:#2b2b2b;letter-spacing:0.742px;">"acc_timestamp":</div>
<div class="t" style="left:1672.60px;top:755.00px;font-size:26px;line-height:34px;color:#2b2b2b;letter-spacing:0.881px;">"2020-10-15T19:24:11.725143+00:00"}</div>
<div class="b" style="left:0px;top:794px;width:2880px;height:2px;background:#dfdfdf;"></div>
<svg class="b" style="left:32px;top:804px;" width="108" height="32" viewBox="0 0 108 32"><circle cx="15.900" cy="15.900" r="14.900" stroke="#8a8a8a" stroke-width="1.900" fill="none"/><path d="M10.400 16.200 H21.600 M10.400 22.300 H21.600" stroke="#8a8a8a" stroke-width="3" stroke-linecap="round"/><circle cx="51.900" cy="15.900" r="14.900" stroke="#8a8a8a" stroke-width="1.900" fill="none"/><path d="M46.300 16.100 H57.700 M46.300 22.200 H57.700" stroke="#8a8a8a" stroke-width="2.500" stroke-linecap="round"/><path d="M48.800 25.800 L55.500 12.600" stroke="#8a8a8a" stroke-width="2.300" stroke-linecap="round"/><path d="M76.600 7 h4.200 v3.800 h-4.200z M83.200 7 h23.800 v3.800 h-23.800z M76.600 13.800 h4.200 v3.800 h-4.200z M83.200 13.800 h23.800 v3.800 h-23.800z M76.600 20.500 h4.200 v3.800 h-4.200z M83.200 20.500 h23.800 v3.800 h-23.800z" fill="#8f8f8f"/></svg>
<div class="t " style="left:171.36px;top:803.00px;font-size:26px;line-height:34px;color:#2b2b2b;letter-spacing:0.328px;">@source</div>
<div class="t" style="left:463.00px;top:803.00px;font-size:26px;line-height:34px;color:#2b2b2b;letter-spacing:0.740px;">/usr</div>
<div class="t" style="left:509.30px;top:803.00px;font-size:26px;line-height:34px;color:#2b2b2b;letter-spacing:1.041px;">/lib</div>
<div class="t" style="left:546.70px;top:803.00px;font-size:26px;line-height:34px;color:#2b2b2b;letter-spacing:0.620px;">/mongooseim</div>
<div class="t" style="left:709.60px;top:803.00px;font-size:26px;line-height:34px;color:#2b2b2b;letter-spacing:0.970px;">/log</div>
<div class="t" style="left:755.40px;top:803.00px;font-size:26px;line-height:34px;color:#2b2b2b;letter-spacing:0.405px;">/mongooseim.json.1</div>
<div class="b" style="left:0px;top:844px;width:2880px;height:2px;background:#dfdfdf;"></div>
<svg class="b" style="left:32px;top:854px;" width="108" height="32" viewBox="0 0 108 32"><circle cx="15.900" cy="15.900" r="14.900" stroke="#8a8a8a" stroke-width="1.900" fill="none"/><path d="M10.400 16.200 H21.600 M10.400 22.300 H21.600" stroke="#8a8a8a" stroke-width="3" stroke-linecap="round"/><circle cx="51.900" cy="15.900" r="14.900" stroke="#8a8a8a" stroke-width="1.900" fill="none"/><path d="M46.300 16.100 H57.700 M46.300 22.200 H57.700" stroke="#8a8a8a" stroke-width="2.500" stroke-linecap="round"/><path d="M48.800 25.800 L55.500 12.600" stroke="#8a8a8a" stroke-width="2.300" stroke-linecap="round"/><path d="M76.600 7 h4.200 v3.800 h-4.200z M83.200 7 h23.800 v3.800 h-23.800z M76.600 13.800 h4.200 v3.800 h-4.200z M83.200 13.800 h23.800 v3.800 h-23.800z M76.600 20.500 h4.200 v3.800 h-4.200z M83.200 20.500 h23.800 v3.800 h-23.800z" fill="#8f8f8f"/></svg>
<div class="t " style="left:171.36px;top:853.00px;font-size:26px;line-height:34px;color:#2b2b2b;letter-spacing:0.647px;">@timestamp</div>
<div class="t " style="left:461.02px;top:853.00px;font-size:26px;line-height:34px;color:#2b2b2b;letter-spacing:0.899px;">1602789851725</div>
<div class="t ns" style="left:681.25px;top:856.00px;font-size:23px;line-height:30px;color:#4f22a5;font-weight:700;letter-spacing:1.207px;">(2020-10-15 19:24:11 UTC)</div>
<div class="b" style="left:0px;top:894px;width:2880px;height:2px;background:#dfdfdf;"></div>
<svg class="b" style="left:32px;top:904px;" width="108" height="32" viewBox="0 0 108 32"><circle cx="15.900" cy="15.900" r="14.900" stroke="#8a8a8a" stroke-width="1.900" fill="none"/><path d="M10.400 16.200 H21.600 M10.400 22.300 H21.600" stroke="#8a8a8a" stroke-width="3" stroke-linecap="round"/><circle cx="51.900" cy="15.900" r="14.900" stroke="#8a8a8a" stroke-width="1.900" fill="none"/><path d="M46.300 16.100 H57.700 M46.300 22.200 H57.700" stroke="#8a8a8a" stroke-width="2.500" stroke-linecap="round"/><path d="M48.800 25.800 L55.500 12.600" stroke="#8a8a8a" stroke-width="2.300" stroke-linecap="round"/><path d="M76.600 7 h4.200 v3.800 h-4.200z M83.200 7 h23.800 v3.800 h-23.800z M76.600 13.800 h4.200 v3.800 h-4.200z M83.200 13.800 h23.800 v3.800 h-23.800z M76.600 20.500 h4.200 v3.800 h-4.200z M83.200 20.500 h23.800 v3.800 h-23.800z" fill="#8f8f8f"/></svg>
<div class="t " style="left:171.36px;top:903.00px;font-size:26px;line-height:34px;color:#2b2b2b;letter-spacing:0.526px;">@timezone</div>
<div class="t " style="left:462.17px;top:903.00px;font-size:26px;line-height:34px;color:#2b2b2b;letter-spacing:-0.544px;">Z</div>
<div class="b" style="left:0px;top:944px;width:2880px;height:2px;background:#dfdfdf;"></div>
<svg class="b" style="left:32px;top:954px;" width="108" height="32" viewBox="0 0 108 32"><circle cx="15.900" cy="15.900" r="14.900" stroke="#8a8a8a" stroke-width="1.900" fill="none"/><path d="M10.400 16.200 H21.600 M10.400 22.300 H21.600" stroke="#8a8a8a" stroke-width="3" stroke-linecap="round"/><circle cx="51.900" cy="15.900" r="14.900" stroke="#8a8a8a" stroke-width="1.900" fill="none"/><path d="M46.300 16.100 H57.700 M46.300 22.200 H57.700" stroke="#8a8a8a" stroke-width="2.500" stroke-linecap="round"/><path d="M48.800 25.800 L55.500 12.600" stroke="#8a8a8a" stroke-width="2.300" stroke-linecap="round"/><path d="M76.600 7 h4.200 v3.800 h-4.200z M83.200 7 h23.800 v3.800 h-23.800z M76.600 13.800 h4.200 v3.800 h-4.200z M83.200 13.800 h23.800 v3.800 h-23.800z M76.600 20.500 h4.200 v3.800 h-4.200z M83.200 20.500 h23.800 v3.800 h-23.800z" fill="#8f8f8f"/></svg>
<div class="t " style="left:172.30px;top:953.00px;font-size:26px;line-height:34px;color:#2b2b2b;letter-spacing:0.613px;">acc_timestamp</div>
<div class="t " style="left:461.69px;top:953.00px;font-size:26px;line-height:34px;color:#2b2b2b;letter-spacing:0.788px;">2020-10-15T19:24:11.725143+00:00</div>
<div class="b" style="left:0px;top:994px;width:2880px;height:2px;background:#dfdfdf;"></div>
<svg class="b" style="left:32px;top:1004px;" width="108" height="32" viewBox="0 0 108 32"><circle cx="15.900" cy="15.900" r="14.900" stroke="#8a8a8a" stroke-width="1.900" fill="none"/><path d="M10.400 16.200 H21.600 M10.400 22.300 H21.600" stroke="#8a8a8a" stroke-width="3" stroke-linecap="round"/><circle cx="51.900" cy="15.900" r="14.900" stroke="#8a8a8a" stroke-width="1.900" fill="none"/><path d="M46.300 16.100 H57.700 M46.300 22.200 H57.700" stroke="#8a8a8a" stroke-width="2.500" stroke-linecap="round"/><path d="M48.800 25.800 L55.500 12.600" stroke="#8a8a8a" stroke-width="2.300" stroke-linecap="round"/><path d="M76.600 7 h4.200 v3.800 h-4.200z M83.200 7 h23.800 v3.800 h-23.800z M76.600 13.800 h4.200 v3.800 h-4.200z M83.200 13.800 h23.800 v3.800 h-23.800z M76.600 20.500 h4.200 v3.800 h-4.200z M83.200 20.500 h23.800 v3.800 h-23.800z" fill="#8f8f8f"/></svg>
<div class="t " style="left:173.03px;top:1003.00px;font-size:26px;line-height:34px;color:#2b2b2b;letter-spacing:1.037px;">field</div>
<div class="t " style="left:460.87px;top:1003.00px;font-size:26px;line-height:34px;color:#2b2b2b;letter-spacing:1.095px;">FN</div>
<div class="b" style="left:0px;top:1044px;width:2880px;height:2px;background:#dfdfdf;"></div>
<svg class="b" style="left:32px;top:1054px;" width="108" height="32" viewBox="0 0 108 32"><circle cx="15.900" cy="15.900" r="14.900" stroke="#8a8a8a" stroke-width="1.900" fill="none"/><path d="M10.400 16.200 H21.600 M10.400 22.300 H21.600" stroke="#8a8a8a" stroke-width="3" stroke-linecap="round"/><circle cx="51.900" cy="15.900" r="14.900" stroke="#8a8a8a" stroke-width="1.900" fill="none"/><path d="M46.300 16.100 H57.700 M46.300 22.200 H57.700" stroke="#8a8a8a" stroke-width="2.500" stroke-linecap="round"/><path d="M48.800 25.800 L55.500 12.600" stroke="#8a8a8a" stroke-width="2.300" stroke-linecap="round"/><path d="M76.600 7 h4.200 v3.800 h-4.200z M83.200 7 h23.800 v3.800 h-23.800z M76.600 13.800 h4.200 v3.800 h-4.200z M83.200 13.800 h23.800 v3.800 h-23.800z M76.600 20.500 h4.200 v3.800 h-4.200z M83.200 20.500 h23.800 v3.800 h-23.800z" fill="#8f8f8f"/></svg>
<div class="t " style="left:173.03px;top:1053.00px;font-size:26px;line-height:34px;color:#2b2b2b;letter-spacing:0.767px;">from_jid</div>
<div class="t " style="left:461.90px;top:1053.00px;font-size:26px;line-height:34px;color:#2b2b2b;letter-spacing:0.237px;">alicE@localhost/res1</div>
<div class="b" style="left:0px;top:1094px;width:2880px;height:2px;background:#dfdfdf;"></div>
<svg class="b" style="left:32px;top:1104px;" width="108" height="32" viewBox="0 0 108 32"><circle cx="15.900" cy="15.900" r="14.900" stroke="#8a8a8a" stroke-width="1.900" fill="none"/><path d="M10.400 16.200 H21.600 M10.400 22.300 H21.600" stroke="#8a8a8a" stroke-width="3" stroke-linecap="round"/><circle cx="51.900" cy="15.900" r="14.900" stroke="#8a8a8a" stroke-width="1.900" fill="none"/><path d="M46.300 16.100 H57.700 M46.300 22.200 H57.700" stroke="#8a8a8a" stroke-width="2.500" stroke-linecap="round"/><path d="M48.800 25.800 L55.500 12.600" stroke="#8a8a8a" stroke-width="2.300" stroke-linecap="round"/><path d="M76.600 7 h4.200 v3.800 h-4.200z M83.200 7 h23.800 v3.800 h-23.800z M76.600 13.800 h4.200 v3.800 h-4.200z M83.200 13.800 h23.800 v3.800 h-23.800z M76.600 20.500 h4.200 v3.800 h-4.200z M83.200 20.500 h23.800 v3.800 h-23.800z" fill="#8f8f8f"/></svg>
<div class="t " style="left:171.65px;top:1103.00px;font-size:26px;line-height:34px;color:#2b2b2b;letter-spacing:0.805px;">level</div>
<div class="t " style="left:463.04px;top:1103.00px;font-size:26px;line-height:34px;color:#2b2b2b;letter-spacing:0.548px;">warning</div>
<div class="b" style="left:0px;top:1144px;width:2880px;height:2px;background:#dfdfdf;"></div>
<svg class="b" style="left:32px;top:1154px;" width="108" height="32" viewBox="0 0 108 32"><circle cx="15.900" cy="15.900" r="14.900" stroke="#8a8a8a" stroke-width="1.900" fill="none"/><path d="M10.400 16.200 H21.600 M10.400 22.300 H21.600" stroke="#8a8a8a" stroke-width="3" stroke-linecap="round"/><circle cx="51.900" cy="15.900" r="14.900" stroke="#8a8a8a" stroke-width="1.900" fill="none"/><path d="M46.300 16.100 H57.700 M46.300 22.200 H57.700" stroke="#8a8a8a" stroke-width="2.500" stroke-linecap="round"/><path d="M48.800 25.800 L55.500 12.600" stroke="#8a8a8a" stroke-width="2.300" stroke-linecap="round"/><path d="M76.600 7 h4.200 v3.800 h-4.200z M83.200 7 h23.800 v3.800 h-23.800z M76.600 13.800 h4.200 v3.800 h-4.200z M83.200 13.800 h23.800 v3.800 h-23.800z M76.600 20.500 h4.200 v3.800 h-4.200z M83.200 20.500 h23.800 v3.800 h-23.800z" fill="#8f8f8f"/></svg>
<div class="t " style="left:171.67px;top:1153.00px;font-size:26px;line-height:34px;color:#2b2b2b;letter-spacing:0.827px;">meta.file</div>
<div class="t" style="left:463.00px;top:1153.00px;font-size:26px;line-height:34px;color:#2b2b2b;letter-spacing:0.868px;">/home</div>
<div class="t" style="left:539.60px;top:1153.00px;font-size:26px;line-height:34px;color:#2b2b2b;letter-spacing:0.865px;">/travis</div>
<div class="t" style="left:615.00px;top:1153.00px;font-size:26px;line-height:34px;color:#2b2b2b;letter-spacing:0.841px;">/build</div>
<div class="t" style="left:682.20px;top:1153.00px;font-size:26px;line-height:34px;color:#2b2b2b;letter-spacing:0.524px;">/arcusfelis</div>
<div class="t" style="left:805.00px;top:1153.00px;font-size:26px;line-height:34px;color:#2b2b2b;letter-spacing:0.825px;">/MongooseIM</div>
<div class="t" style="left:971.60px;top:1153.00px;font-size:26px;line-height:34px;color:#2b2b2b;letter-spacing:1.205px;">/src</div>
<div class="t" style="left:1018.30px;top:1153.00px;font-size:26px;line-height:34px;color:#2b2b2b;letter-spacing:0.268px;">/mod_vcard.erl</div>
<div class="b" style="left:0px;top:1194px;width:2880px;height:2px;background:#dfdfdf;"></div>
<svg class="b" style="left:32px;top:1204px;" width="108" height="32" viewBox="0 0 108 32"><circle cx="15.900" cy="15.900" r="14.900" stroke="#8a8a8a" stroke-width="1.900" fill="none"/><path d="M10.400 16.200 H21.600 M10.400 22.300 H21.600" stroke="#8a8a8a" stroke-width="3" stroke-linecap="round"/><circle cx="51.900" cy="15.900" r="14.900" stroke="#8a8a8a" stroke-width="1.900" fill="none"/><path d="M46.300 16.100 H57.700 M46.300 22.200 H57.700" stroke="#8a8a8a" stroke-width="2.500" stroke-linecap="round"/><path d="M48.800 25.800 L55.500 12.600" stroke="#8a8a8a" stroke-width="2.300" stroke-linecap="round"/><path d="M76.600 7 h4.200 v3.800 h-4.200z M83.200 7 h23.800 v3.800 h-23.800z M76.600 13.800 h4.200 v3.800 h-4.200z M83.200 13.800 h23.800 v3.800 h-23.800z M76.600 20.500 h4.200 v3.800 h-4.200z M83.200 20.500 h23.800 v3.800 h-23.800z" fill="#8f8f8f"/></svg>
<div class="t " style="left:171.67px;top:1203.00px;font-size:26px;line-height:34px;color:#2b2b2b;letter-spacing:0.698px;">meta.line</div>
<div class="t " style="left:462.01px;top:1203.00px;font-size:26px;line-height:34px;color:#2b2b2b;letter-spacing:-1.245px;">311</div>
<div class="b" style="left:0px;top:1244px;width:2880px;height:2px;background:#dfdfdf;"></div>
<svg class="b" style="left:32px;top:1254px;" width="108" height="32" viewBox="0 0 108 32"><circle cx="15.900" cy="15.900" r="14.900" stroke="#8a8a8a" stroke-width="1.900" fill="none"/><path d="M10.400 16.200 H21.600 M10.400 22.300 H21.600" stroke="#8a8a8a" stroke-width="3" stroke-linecap="round"/><circle cx="51.900" cy="15.900" r="14.900" stroke="#8a8a8a" stroke-width="1.900" fill="none"/><path d="M46.300 16.100 H57.700 M46.300 22.200 H57.700" stroke="#8a8a8a" stroke-width="2.500" stroke-linecap="round"/><path d="M48.800 25.800 L55.500 12.600" stroke="#8a8a8a" stroke-width="2.300" stroke-linecap="round"/><path d="M76.600 7 h4.200 v3.800 h-4.200z M83.200 7 h23.800 v3.800 h-23.800z M76.600 13.800 h4.200 v3.800 h-4.200z M83.200 13.800 h23.800 v3.800 h-23.800z M76.600 20.500 h4.200 v3.800 h-4.200z M83.200 20.500 h23.800 v3.800 h-23.800z" fill="#8f8f8f"/></svg>
<div class="t " style="left:171.67px;top:1253.00px;font-size:26px;line-height:34px;color:#2b2b2b;letter-spacing:0.694px;">meta.mfa</div>
<div class="t " style="left:462.57px;top:1253.00px;font-size:26px;line-height:34px;color:#2b2b2b;letter-spacing:0.225px;">{mod_vcard,process_sm_iq,4}</div>
<div class="b" style="left:0px;top:1294px;width:2880px;height:2px;background:#dfdfdf;"></div>
<svg class="b" style="left:32px;top:1304px;" width="108" height="32" viewBox="0 0 108 32"><circle cx="15.900" cy="15.900" r="14.900" stroke="#8a8a8a" stroke-width="1.900" fill="none"/><path d="M10.400 16.200 H21.600 M10.400 22.300 H21.600" stroke="#8a8a8a" stroke-width="3" stroke-linecap="round"/><circle cx="51.900" cy="15.900" r="14.900" stroke="#8a8a8a" stroke-width="1.900" fill="none"/><path d="M46.300 16.100 H57.700 M46.300 22.200 H57.700" stroke="#8a8a8a" stroke-width="2.500" stroke-linecap="round"/><path d="M48.800 25.800 L55.500 12.600" stroke="#8a8a8a" stroke-width="2.300" stroke-linecap="round"/><path d="M76.600 7 h4.200 v3.800 h-4.200z M83.200 7 h23.800 v3.800 h-23.800z M76.600 13.800 h4.200 v3.800 h-4.200z M83.200 13.800 h23.800 v3.800 h-23.800z M76.600 20.500 h4.200 v3.800 h-4.200z M83.200 20.500 h23.800 v3.800 h-23.800z" fill="#8f8f8f"/></svg>
<div class="t " style="left:171.67px;top:1303.00px;font-size:26px;line-height:34px;color:#2b2b2b;letter-spacing:1.054px;">meta.pid</div>
<div class="t " style="left:461.72px;top:1303.00px;font-size:26px;line-height:34px;color:#2b2b2b;letter-spacing:0.762px;">&lt;0.10360.3&gt;</div>
<div class="b" style="left:0px;top:1344px;width:2880px;height:2px;background:#dfdfdf;"></div>
<svg class="b" style="left:32px;top:1354px;" width="108" height="32" viewBox="0 0 108 32"><circle cx="15.900" cy="15.900" r="14.900" stroke="#8a8a8a" stroke-width="1.900" fill="none"/><path d="M10.400 16.200 H21.600 M10.400 22.300 H21.600" stroke="#8a8a8a" stroke-width="3" stroke-linecap="round"/><circle cx="51.900" cy="15.900" r="14.900" stroke="#8a8a8a" stroke-width="1.900" fill="none"/><path d="M46.300 16.100 H57.700 M46.300 22.200 H57.700" stroke="#8a8a8a" stroke-width="2.500" stroke-linecap="round"/><path d="M48.800 25.800 L55.500 12.600" stroke="#8a8a8a" stroke-width="2.300" stroke-linecap="round"/><path d="M76.600 7 h4.200 v3.800 h-4.200z M83.200 7 h23.800 v3.800 h-23.800z M76.600 13.800 h4.200 v3.800 h-4.200z M83.200 13.800 h23.800 v3.800 h-23.800z M76.600 20.500 h4.200 v3.800 h-4.200z M83.200 20.500 h23.800 v3.800 h-23.800z" fill="#8f8f8f"/></svg>
<div class="t " style="left:172.31px;top:1353.00px;font-size:26px;line-height:34px;color:#2b2b2b;letter-spacing:0.669px;">origin_pid</div>
<div class="t " style="left:461.72px;top:1353.00px;font-size:26px;line-height:34px;color:#2b2b2b;letter-spacing:0.542px;">&lt;0.10370.3&gt;</div>
<div class="b" style="left:0px;top:1394px;width:2880px;height:2px;background:#dfdfdf;"></div>
<svg class="b" style="left:32px;top:1404px;" width="108" height="32" viewBox="0 0 108 32"><circle cx="15.900" cy="15.900" r="14.900" stroke="#8a8a8a" stroke-width="1.900" fill="none"/><path d="M10.400 16.200 H21.600 M10.400 22.300 H21.600" stroke="#8a8a8a" stroke-width="3" stroke-linecap="round"/><circle cx="51.900" cy="15.900" r="14.900" stroke="#8a8a8a" stroke-width="1.900" fill="none"/><path d="M46.300 16.100 H57.700 M46.300 22.200 H57.700" stroke="#8a8a8a" stroke-width="2.500" stroke-linecap="round"/><path d="M48.800 25.800 L55.500 12.600" stroke="#8a8a8a" stroke-width="2.300" stroke-linecap="round"/><path d="M76.600 7 h4.200 v3.800 h-4.200z M83.200 7 h23.800 v3.800 h-23.800z M76.600 13.800 h4.200 v3.800 h-4.200z M83.200 13.800 h23.800 v3.800 h-23.800z M76.600 20.500 h4.200 v3.800 h-4.200z M83.200 20.500 h23.800 v3.800 h-23.800z" fill="#8f8f8f"/></svg>
<div class="t " style="left:171.72px;top:1403.00px;font-size:26px;line-height:34px;color:#2b2b2b;letter-spacing:0.972px;">packet</div>
<div class="t" style="left:462.32px;top:1403.00px;font-size:26px;line-height:34px;color:#2b2b2b;letter-spacing:0.862px;">&lt;iq </div>
<div class="t" style="left:508.41px;top:1403.00px;font-size:26px;line-height:34px;color:#2b2b2b;letter-spacing:0.420px;">xml:</div>
<div class="t" style="left:557.75px;top:1403.00px;font-size:26px;line-height:34px;color:#2b2b2b;letter-spacing:0.775px;">lang='en' </div>
<div class="t" style="left:675.91px;top:1403.00px;font-size:26px;line-height:34px;color:#2b2b2b;letter-spacing:0.917px;">type='set' </div>
<div class="t" style="left:802.16px;top:1403.00px;font-size:26px;line-height:34px;color:#2b2b2b;letter-spacing:1.421px;">id='6c4477cbcb2fdf8a0e4abbb85c985339'&gt;</div>
<div class="t" style="left:1359.12px;top:1403.00px;font-size:26px;line-height:34px;color:#2b2b2b;letter-spacing:0.590px;">&lt;vCard </div>
<div class="t" style="left:1455.01px;top:1403.00px;font-size:26px;line-height:34px;color:#2b2b2b;letter-spacing:0.962px;">xmlns='vcard-temp'&gt;</div>
<div class="t" style="left:1711.52px;top:1403.00px;font-size:26px;line-height:34px;color:#2b2b2b;letter-spacing:1.009px;">&lt;FN&gt;</div>
<div class="b g" style="left:1780.9px;top:1404.9px;">0FF<br>FFE</div>
<div class="t" style="left:1814.62px;top:1403.00px;font-size:26px;line-height:34px;color:#2b2b2b;letter-spacing:0.610px;">&lt;/FN&gt;</div>
<div class="t" style="left:1889.92px;top:1403.00px;font-size:26px;line-height:34px;color:#2b2b2b;letter-spacing:0.944px;">&lt;/vCard&gt;</div>
<div class="t" style="left:2004.42px;top:1403.00px;font-size:26px;line-height:34px;color:#2b2b2b;letter-spacing:1.306px;">&lt;/iq&gt;</div>
<div class="b" style="left:0px;top:1444px;width:2880px;height:2px;background:#dfdfdf;"></div>
<svg class="b" style="left:32px;top:1454px;" width="108" height="32" viewBox="0 0 108 32"><circle cx="15.900" cy="15.900" r="14.900" stroke="#8a8a8a" stroke-width="1.900" fill="none"/><path d="M10.400 16.200 H21.600 M10.400 22.300 H21.600" stroke="#8a8a8a" stroke-width="3" stroke-linecap="round"/><circle cx="51.900" cy="15.900" r="14.900" stroke="#8a8a8a" stroke-width="1.900" fill="none"/><path d="M46.300 16.100 H57.700 M46.300 22.200 H57.700" stroke="#8a8a8a" stroke-width="2.500" stroke-linecap="round"/><path d="M48.800 25.800 L55.500 12.600" stroke="#8a8a8a" stroke-width="2.300" stroke-linecap="round"/><path d="M76.600 7 h4.200 v3.800 h-4.200z M83.200 7 h23.800 v3.800 h-23.800z M76.600 13.800 h4.200 v3.800 h-4.200z M83.200 13.800 h23.800 v3.800 h-23.800z M76.600 20.500 h4.200 v3.800 h-4.200z M83.200 20.500 h23.800 v3.800 h-23.800z" fill="#8f8f8f"/></svg>
<div class="t " style="left:171.67px;top:1453.00px;font-size:26px;line-height:34px;color:#2b2b2b;letter-spacing:0.703px;">reason</div>
<div class="t " style="left:461.26px;top:1453.00px;font-size:26px;line-height:34px;color:#2b2b2b;letter-spacing:0.382px;">invalid_input</div>
<div class="b" style="left:0px;top:1494px;width:2880px;height:2px;background:#dfdfdf;"></div>
<svg class="b" style="left:32px;top:1504px;" width="108" height="32" viewBox="0 0 108 32"><circle cx="15.900" cy="15.900" r="14.900" stroke="#8a8a8a" stroke-width="1.900" fill="none"/><path d="M10.400 16.200 H21.600 M10.400 22.300 H21.600" stroke="#8a8a8a" stroke-width="3" stroke-linecap="round"/><circle cx="51.900" cy="15.900" r="14.900" stroke="#8a8a8a" stroke-width="1.900" fill="none"/><path d="M46.300 16.100 H57.700 M46.300 22.200 H57.700" stroke="#8a8a8a" stroke-width="2.500" stroke-linecap="round"/><path d="M48.800 25.800 L55.500 12.600" stroke="#8a8a8a" stroke-width="2.300" stroke-linecap="round"/><path d="M76.600 7 h4.200 v3.800 h-4.200z M83.200 7 h23.800 v3.800 h-23.800z M76.600 13.800 h4.200 v3.800 h-4.200z M83.200 13.800 h23.800 v3.800 h-23.800z M76.600 20.500 h4.200 v3.800 h-4.200z M83.200 20.500 h23.800 v3.800 h-23.800z" fill="#8f8f8f"/></svg>
<div class="t " style="left:173.01px;top:1503.00px;font-size:26px;line-height:34px;color:#2b2b2b;letter-spacing:0.763px;">to_jid</div>
<div class="t " style="left:461.90px;top:1503.00px;font-size:26px;line-height:34px;color:#2b2b2b;letter-spacing:0.252px;">alicE@localhost</div>
<div class="b" style="left:0px;top:1544px;width:2880px;height:2px;background:#dfdfdf;"></div>
<svg class="b" style="left:32px;top:1554px;" width="108" height="32" viewBox="0 0 108 32"><circle cx="15.900" cy="15.900" r="14.900" stroke="#8a8a8a" stroke-width="1.900" fill="none"/><path d="M10.400 16.200 H21.600 M10.400 22.300 H21.600" stroke="#8a8a8a" stroke-width="3" stroke-linecap="round"/><circle cx="51.900" cy="15.900" r="14.900" stroke="#8a8a8a" stroke-width="1.900" fill="none"/><path d="M46.300 16.100 H57.700 M46.300 22.200 H57.700" stroke="#8a8a8a" stroke-width="2.500" stroke-linecap="round"/><path d="M48.800 25.800 L55.500 12.600" stroke="#8a8a8a" stroke-width="2.300" stroke-linecap="round"/><path d="M76.600 7 h4.200 v3.800 h-4.200z M83.200 7 h23.800 v3.800 h-23.800z M76.600 13.800 h4.200 v3.800 h-4.200z M83.200 13.800 h23.800 v3.800 h-23.800z M76.600 20.500 h4.200 v3.800 h-4.200z M83.200 20.500 h23.800 v3.800 h-23.800z" fill="#8f8f8f"/></svg>
<div class="t " style="left:173.44px;top:1553.00px;font-size:26px;line-height:34px;color:#2b2b2b;letter-spacing:0.411px;">what</div>
<div class="t " style="left:462.91px;top:1553.00px;font-size:26px;line-height:34px;color:#2b2b2b;letter-spacing:0.015px;">vcard_sm_iq_set_failed</div>
<div class="b" style="left:0px;top:1594px;width:2880px;height:2px;background:#dfdfdf;"></div>
<svg class="b" style="left:32px;top:1604px;" width="108" height="32" viewBox="0 0 108 32"><circle cx="15.900" cy="15.900" r="14.900" stroke="#8a8a8a" stroke-width="1.900" fill="none"/><path d="M10.400 16.200 H21.600 M10.400 22.300 H21.600" stroke="#8a8a8a" stroke-width="3" stroke-linecap="round"/><circle cx="51.900" cy="15.900" r="14.900" stroke="#8a8a8a" stroke-width="1.900" fill="none"/><path d="M46.300 16.100 H57.700 M46.300 22.200 H57.700" stroke="#8a8a8a" stroke-width="2.500" stroke-linecap="round"/><path d="M48.800 25.800 L55.500 12.600" stroke="#8a8a8a" stroke-width="2.300" stroke-linecap="round"/><path d="M76.600 7 h4.200 v3.800 h-4.200z M83.200 7 h23.800 v3.800 h-23.800z M76.600 13.800 h4.200 v3.800 h-4.200z M83.200 13.800 h23.800 v3.800 h-23.800z M76.600 20.500 h4.200 v3.800 h-4.200z M83.200 20.500 h23.800 v3.800 h-23.800z" fill="#8f8f8f"/></svg>
<div class="t " style="left:173.44px;top:1603.00px;font-size:26px;line-height:34px;color:#2b2b2b;letter-spacing:0.731px;">when</div>
<div class="t " style="left:461.69px;top:1603.00px;font-size:26px;line-height:34px;color:#2b2b2b;letter-spacing:0.914px;">2020-10-15T19:24:11.725389+00:00</div>
<div class="b" style="left:0px;top:1644px;width:2880px;height:2px;background:#dfdfdf;"></div>
<svg class="b" style="left:0px;top:1624px;" width="10" height="10" viewBox="0 0 10 10"><path d="M0 0 V10 H10 A10 10 0 0 1 0 0Z" fill="#000"/></svg>
<svg class="b" style="left:2870px;top:1624px;" width="10" height="10" viewBox="0 0 10 10"><path d="M10 0 V10 H0 A10 10 0 0 0 10 0Z" fill="#000"/></svg>
</div>
</body></html>
